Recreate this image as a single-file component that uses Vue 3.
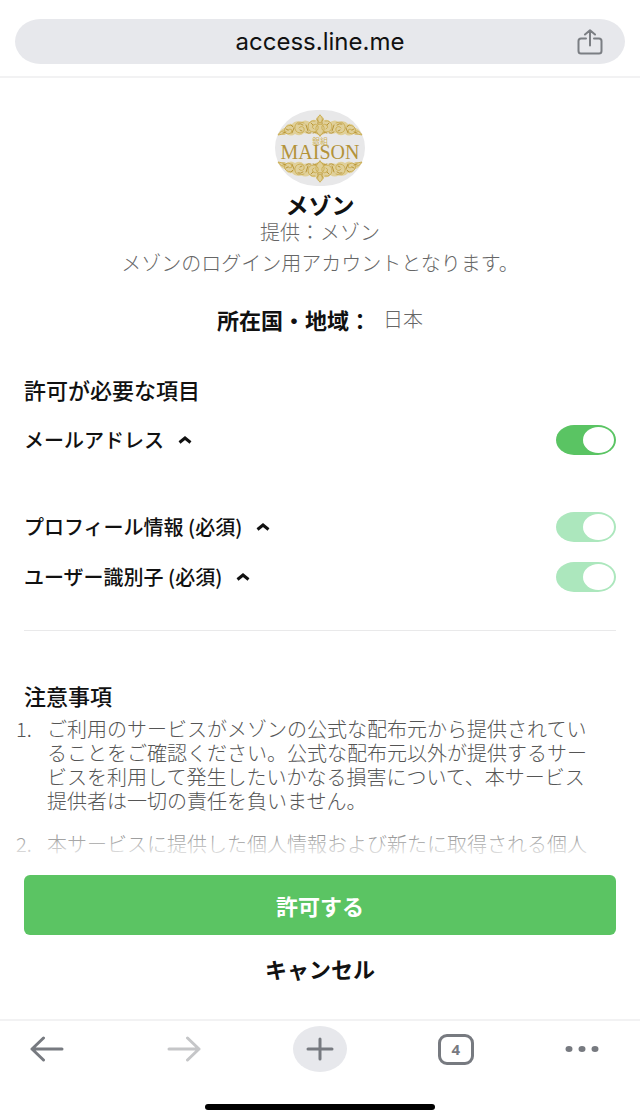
<template>
    <div class="screen">
        <header class="address-bar">
            <div class="address">
                <span class="url">access.line.me</span>
                <button class="share" type="button" aria-label="共有">
                    <svg width="26" height="26" viewBox="0 0 26 26">
                        <path d="M9 9.5H4Q1.5 9.5 1.5 12V22Q1.5 24.5 4 24.5H22Q24.5 24.5 24.5 22V12Q24.5 9.5 22 9.5H17M13 16.5V1.5M8 5.5L13 1.2L18 5.5" />
                    </svg>
                </button>
            </div>
        </header>

        <main class="content">
            <section class="provider">
                <svg class="logo" width="90" height="76" viewBox="0 0 90 76" role="img" aria-label="MAISON">
                    <defs>
                        <!-- 上下で使い回す飾り模様の片側 -->
                        <g id="scroll">
                            <path class="leaf" d="M45 5q-4 2-4 5q-5-1-6 2q-5-3-9 0q-6-2-9 2q-5-1-7 4q-4 0-7 7q5-1 9-1q4 3 8 0q5 3 9-1q5 2 8-1q4 2 8 4z" />
                            <path d="M40 11q-6-1-7 5q0 6 6 6q5-1 4-6q-2-3-5-1q-2 3 1 4M29 13q-7-3-9 3q-1 6 5 7q5 0 4-5q-3-3-5 0M18 16q-5-2-8 2q-2 5 3 6q4 0 4-4q-2-2-4 0M10 21q-4-1-7 4q4-1 7-1" />
                            <path class="shade" d="M42 9q2 3 1 5M36 13l2 2M31 15l2 6M23 14q3-1 5 1M31 22q2 2 5 1M19 18l-2 5M16 15l2 2M11 19l2 1M8 23l3-1M38 23q4-2 7 3M25 20l2 1" />
                        </g>
                        <g id="ornament">
                            <use href="#scroll" />
                            <use href="#scroll" transform="matrix(-1 0 0 1 90 0)" />
                            <path d="M45 5q-5 4 0 8q5-4 0-8M45 14q-5 1-4 6q1 4 4 6q3-2 4-6q1-5-4-6" />
                        </g>
                    </defs>
                    <rect width="90" height="76" rx="41" ry="38" fill="#e8e8e9" />
                    <use class="gold" href="#ornament" />
                    <use class="gold" href="#ornament" transform="matrix(1 0 0 -1 0 77)" />
                    <text class="logo-kanji" x="45" y="34">銀組</text>
                    <text class="logo-name" x="45" y="49">MAISON</text>
                </svg>
                <h1>メゾン</h1>
                <p class="by">提供：メゾン</p>
                <p class="about">メゾンのログイン用アカウントとなります。</p>
                <dl class="region">
                    <dt>所在国・地域：</dt>
                    <dd>日本</dd>
                </dl>
            </section>

            <section class="permissions">
                <h2>許可が必要な項目</h2>
                <div v-for="item in permissions" :key="item.id" class="permission" :class="{ optional: !item.required }">
                    <label :for="item.id">{{ item.label }}</label>
                    <button class="fold" type="button" :aria-label="item.label + 'の詳細'">
                        <svg width="14" height="8" viewBox="0 0 14 8">
                            <path d="M1.5 6.5L7 2L12.5 6.5" />
                        </svg>
                    </button>
                    <input :id="item.id" v-model="item.allowed" class="switch" type="checkbox" :disabled="item.required">
                </div>
            </section>

            <section class="notes">
                <h2>注意事項</h2>
                <ol>
                    <li v-for="note in notes" :key="note">{{ note }}</li>
                </ol>
            </section>
        </main>

        <div class="actions">
            <button class="allow" type="button">許可する</button>
            <button class="cancel" type="button">キャンセル</button>
        </div>

        <nav class="toolbar">
            <button type="button" aria-label="戻る" class="back">
                <svg width="34" height="26" viewBox="0 0 34 26">
                    <path d="M32 13H2M13.5 2L2 13L13.5 24" />
                </svg>
            </button>
            <button type="button" aria-label="進む" class="inactive">
                <svg width="34" height="26" viewBox="0 0 34 26">
                    <path d="M2 13H32M20.5 2L32 13L20.5 24" />
                </svg>
            </button>
            <button type="button" aria-label="新しいタブ" class="new-tab">
                <svg width="28" height="24" viewBox="0 0 28 24">
                    <path d="M2 12H26M14 2V22" />
                </svg>
            </button>
            <button type="button" aria-label="タブ一覧" class="tabs"><span>4</span></button>
            <button type="button" aria-label="メニュー">
                <svg width="34" height="8" viewBox="0 0 34 8" class="dots">
                    <ellipse cx="4" cy="4" rx="3.5" ry="3" />
                    <ellipse cx="17" cy="4" rx="3.5" ry="3" />
                    <ellipse cx="30" cy="4" rx="3.5" ry="3" />
                </svg>
            </button>
        </nav>
        <div class="home-indicator"></div>
    </div>
</template>

<script setup>
import { ref } from 'vue';

// 許可項目（必須のものは切り替え不可）
const permissions = ref([
    { id: 'email', label: 'メールアドレス', allowed: true, required: false },
    { id: 'profile', label: 'プロフィール情報 (必須)', allowed: true, required: true },
    { id: 'user-id', label: 'ユーザー識別子 (必須)', allowed: true, required: true }
]);

const notes = [
    'ご利用のサービスがメゾンの公式な配布元から提供されていることをご確認ください。公式な配布元以外が提供するサービスを利用して発生したいかなる損害について、本サービス提供者は一切の責任を負いません。',
    '本サービスに提供した個人情報および新たに取得される個人'
];
</script>

<style>
body {
    margin: 0;
    background: #fff;
}
</style>

<style scoped>
.screen {
    display: flex;
    flex-direction: column;
    height: 100vh;
    background: #fff;
    color: #111;
    font-family: "Noto Sans CJK JP", sans-serif;
    font-size: 20px;
    line-height: 24px;
}

h1, h2, p, dl, dd, ol {
    margin: 0;
    padding: 0;
}

button {
    padding: 0;
    border: 0;
    background: none;
    color: inherit;
    font: inherit;
}

svg {
    display: block;
    fill: none;
    stroke: currentColor;
    stroke-width: 2;
    stroke-linecap: round;
    stroke-linejoin: round;
}

/* アドレスバー */
.address-bar {
    padding: 19px 15px 12px;
    border-bottom: 2px solid #f2f2f3;
}

.address {
    display: grid;
    grid-template-columns: 1fr auto 1fr;
    align-items: center;
    height: 45px;
    padding: 0 22px;
    border-radius: 26px / 23px;
    background: #e7e8ec;
}

.url {
    grid-column: 2;
    color: #111;
    font: 24px/45px Inter, sans-serif;
}

.share {
    justify-self: end;
    color: #7b7e83;
}

/* 本文 */
.content {
    flex: 1;
    min-height: 0;
    padding: 32px 24px 0;
    overflow-y: auto;
    scrollbar-width: none;
}

.provider {
    display: flex;
    flex-direction: column;
    align-items: center;
    color: #666;
    font-weight: 300;
}

.logo {
    stroke: none;
}

.gold {
    stroke: #cdb057;
    stroke-width: 1;
}

.leaf {
    fill: #e0d09a;
    stroke: none;
}

.shade {
    stroke: #b9963a;
}

.logo-kanji {
    fill: #cdb057;
    font-size: 8px;
    font-weight: 400;
    text-anchor: middle;
}

.logo-name {
    fill: #b3933a;
    font-family: "Liberation Serif", serif;
    font-size: 20px;
    font-weight: 400;
    text-anchor: middle;
}

h1 {
    margin-top: 6px;
    color: #111;
    font-size: 23px;
    font-weight: 700;
    line-height: 24px;
}

.by {
    margin-top: 4px;
}

.about {
    margin-top: 7px;
}

.region {
    display: flex;
    gap: 12px;
    margin-top: 32px;
}

.region dt {
    color: #111;
    font-size: 22px;
    font-weight: 700;
}

h2 {
    font-size: 22px;
    font-weight: 500;
    line-height: 24px;
}

.permissions {
    margin-top: 46px;
    padding-bottom: 37px;
    border-bottom: 1px solid #e9e9ea;
}

.permission {
    display: flex;
    align-items: center;
    height: 32px;
    margin-top: 18px;
    font-weight: 500;
}

.permission.optional {
    margin: 23px 0 55px;
}

.fold {
    margin-left: 14px;
}

.fold svg {
    stroke-width: 3;
    stroke-linecap: butt;
    stroke-linejoin: miter;
}

.switch {
    display: flex;
    justify-content: flex-start;
    align-items: center;
    width: 60px;
    height: 30px;
    margin: 0 0 0 auto;
    padding: 0 2px;
    box-sizing: border-box;
    border-radius: 18px / 15px;
    background: #ccc;
    appearance: none;
}

.switch::before {
    content: "";
    width: 31px;
    height: 26px;
    border-radius: 50%;
    background: #fff;
}

.switch:checked {
    justify-content: flex-end;
    background: #5ac463;
}

.switch:checked:disabled {
    background: #ace7bd;
}

/* 注意事項 */
.notes {
    margin-top: 52px;
}

.notes ol {
    margin: 10px 0 0 -8px;
    color: #555;
    font-weight: 300;
    list-style: none;
    counter-reset: note;
}

.notes li {
    display: grid;
    grid-template-columns: 31px 1fr;
    margin-bottom: 19px;
    padding-right: 14px;
    counter-increment: note;
}

.notes li::before {
    content: counter(note) ".";
}

/* 操作ボタン */
.actions {
    position: relative;
    padding: 14px 24px 26px;
}

.actions::before {
    content: "";
    position: absolute;
    right: 0;
    bottom: 100%;
    left: 0;
    height: 40px;
    background: linear-gradient(rgba(255, 255, 255, 0), #fff);
    pointer-events: none;
}

.allow, .cancel {
    display: block;
    width: 100%;
    font-size: 22px;
    font-weight: 700;
}

.allow {
    height: 60px;
    border-radius: 6px;
    background: #5bc463;
    color: #fff;
}

.cancel {
    height: 50px;
    margin-top: 8px;
}

/* 下部ツールバー */
.toolbar {
    display: flex;
    justify-content: space-between;
    align-items: center;
    height: 54px;
    padding: 1px 41px 28px 30px;
    border-top: 2px solid #f2f2f3;
    color: #777a80;
}

.toolbar svg {
    stroke-width: 3;
}

.toolbar .back {
    padding-right: 12px;
}

.toolbar .inactive {
    color: #c5c6c8;
}

.toolbar .new-tab {
    display: grid;
    place-items: center;
    width: 54px;
    height: 46px;
    border-radius: 50%;
    background: #e7e8ec;
}

.toolbar .tabs {
    width: 36px;
    height: 31px;
    box-sizing: border-box;
    border: 3px solid;
    border-radius: 9px;
    font: 700 15px/24px "Noto Sans", sans-serif;
}

.toolbar .dots {
    fill: currentColor;
    stroke: none;
}

.home-indicator {
    width: 36%;
    height: 6px;
    margin: 0 auto 10px;
    border-radius: 3px;
    background: #000;
}
</style>
